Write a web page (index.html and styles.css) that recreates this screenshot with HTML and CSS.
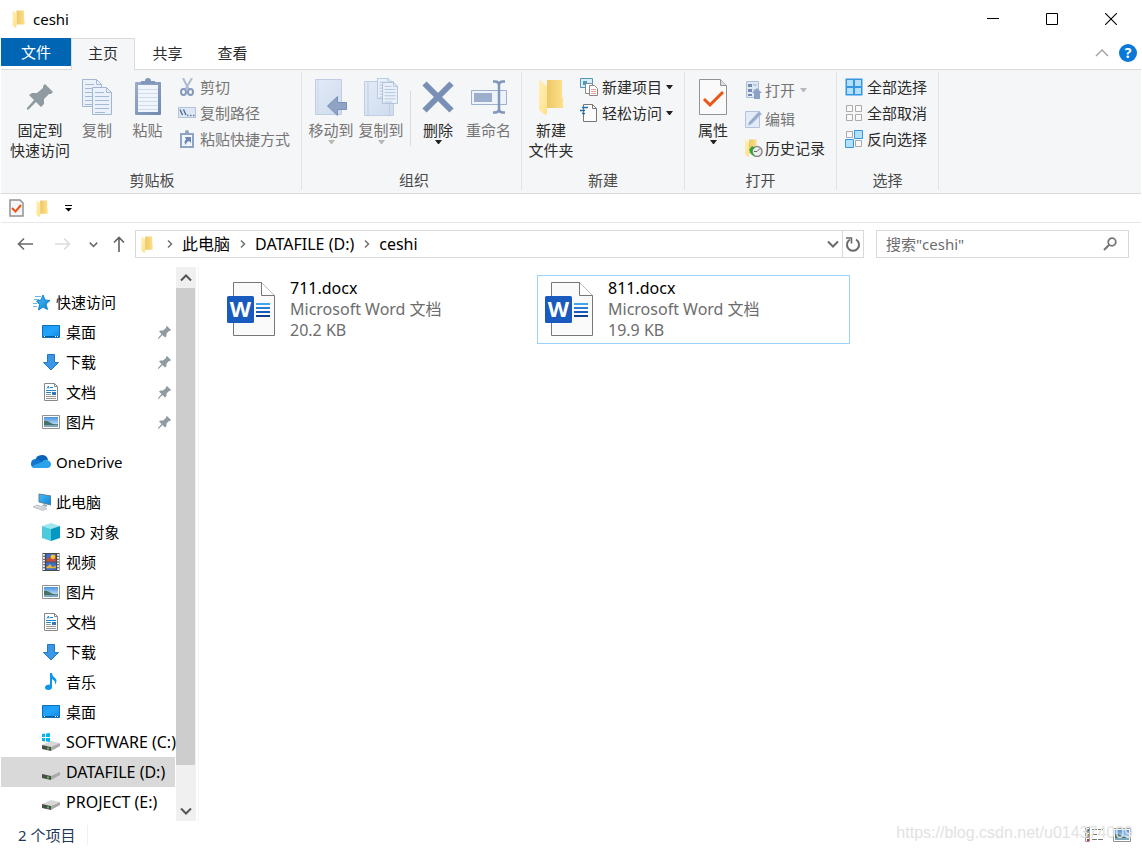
FILE: index.html
```html
<!DOCTYPE html>
<html lang="zh-CN">
<head>
<meta charset="utf-8">
<title>ceshi</title>
<link rel="stylesheet" href="styles.css">
</head>
<body>
<svg class="defs" width="0" height="0" aria-hidden="true">
  <defs>
    <linearGradient id="gFold" x1="0" x2="1" y1="0" y2="0"><stop offset="0" stop-color="#ebc868"/><stop offset="1" stop-color="#ffe089"/></linearGradient>
    <linearGradient id="gFront" x1="0" x2="1" y1="0" y2="1"><stop offset="0" stop-color="#fff0b8"/><stop offset="1" stop-color="#ffe08a"/></linearGradient>
    <linearGradient id="gSky" x1="0" x2="0" y1="0" y2="1"><stop offset="0" stop-color="#4a93dc"/><stop offset="1" stop-color="#e3f2fb"/></linearGradient>
    <linearGradient id="gDesk" x1="0" x2="1" y1="0" y2="1"><stop offset="0" stop-color="#1e96f2"/><stop offset=".5" stop-color="#22a4fb"/><stop offset="1" stop-color="#1187e0"/></linearGradient>
    <linearGradient id="gClip" x1="0" x2="1" y1="0" y2="1"><stop offset="0" stop-color="#9cadcb"/><stop offset="1" stop-color="#7088b2"/></linearGradient>
    <linearGradient id="gPale" x1="0" x2="1" y1="0" y2="1"><stop offset="0" stop-color="#e2eaf6"/><stop offset="1" stop-color="#cfdcee"/></linearGradient>
    <linearGradient id="gBlue" x1="0" x2="1" y1="0" y2="1"><stop offset="0" stop-color="#4cbcf8"/><stop offset="1" stop-color="#0a84d4"/></linearGradient>
  </defs>
  <symbol id="folder" viewBox="0 0 24 36"><path d="M8 1h15v17l1 1v10H8z" fill="url(#gFold)"/><path d="M0 1h1l7 6v28l-2 1-6-5z" fill="url(#gFront)"/></symbol>
  <symbol id="pin" viewBox="0 0 26 26"><path d="M18 0l8 8-2 2-2 0-5 5 0 5-3 3-5-5-7 7-2 1 0-2 7-8-5-5 3-2 5 0 6-5 0-2z" fill="#8f9aa1"/></symbol>
  <symbol id="check" viewBox="0 0 28 36"><path d="M.5.5h21l6 6v29H.5z" fill="#fafafa" stroke="#929292"/><path d="M21.500.5v6h6" fill="#ddd" stroke="#929292"/><path d="M5 20l6 6L24 13" fill="none" stroke="#ea5514" stroke-width="3"/></symbol>
  <symbol id="checkSmall" viewBox="0 0 15 18"><path d="M1 1h10l3 3v13H1z" fill="#f4f6f8" stroke="#929292" stroke-width="1.500"/><path d="M3 9l3.500 3.500L12 6" fill="none" stroke="#ea5514" stroke-width="2"/></symbol>
  <symbol id="sheet" viewBox="0 0 20 28"><path d="M.5.5h14l5 5v22H.5z" fill="#ebf1fa" stroke="#a2b5d2"/><path d="M14.500.5v5h5M3 5.500h9M3 9.500h14M3 13.500h14M3 17.500h14M3 21.500h14M3 25.500h10" fill="none" stroke="#a5b9d6"/></symbol>
  <symbol id="copy" viewBox="0 0 30 36"><use href="#sheet" width="20" height="28"/><use href="#sheet" x="10" y="8" width="20" height="28"/></symbol>
  <symbol id="paste" viewBox="0 0 26 38"><rect y="4" width="26" height="33" rx="1" fill="url(#gClip)"/><rect x="3" y="7" width="20" height="27" fill="#f0f5fc"/><path d="M6 6V3h4q0-3 3-3t3 3h4v3z" fill="#8296bb"/><path d="M3 11.500h20M3 15.500h20M3 19.500h20M3 23.500h20M3 27.500h20M3 31.500h20" stroke="#cfdced"/></symbol>
  <symbol id="cut" viewBox="0 0 18 18"><path d="M5 0l6 12M14 0L7 12" stroke="#aebbd2" stroke-width="2"/><ellipse cx="5.500" cy="14" rx="2.500" ry="3" fill="none" stroke="#8599bc" stroke-width="2"/><ellipse cx="12.500" cy="14" rx="2.500" ry="3" fill="none" stroke="#8599bc" stroke-width="2"/></symbol>
  <symbol id="path" viewBox="0 0 18 18"><rect x=".5" y="3.500" width="17" height="10" fill="#dce6f4" stroke="#b4c4dc"/><path d="M2 5.500l2.500 5.500M5.500 5.500L8 11" stroke="#51688f" stroke-width="1.300"/><path d="M9 11.500h1.500M12 11.500h1.500M15 11.500h1.500" stroke="#667b9e" stroke-width="1.500"/></symbol>
  <symbol id="shortcut" viewBox="0 0 18 18"><path d="M2 3h5q0-3 2-3t2 3h5v15H2z" fill="#8fa3c5"/><path d="M4 5h10v11H4z" fill="#f1f6fd"/><path d="M7 7h6v6l-2-2q-3 1-3 4-3-3 0-5.500z" fill="#6f87b1"/></symbol>
  <symbol id="moveTo" viewBox="0 0 34 38"><path d="M1.500 1.500h26v35h-26z" fill="url(#gPale)" stroke="#bfcee4"/><path d="M4 2v34" stroke="#c8d6e9"/><path d="M32.500 24.500v7h-9v6L13.500 28l10-9.500v6z" fill="#8fa3c5" stroke="#7b90b8"/></symbol>
  <symbol id="copyTo" viewBox="0 0 34 38"><path d="M.5 3.500h29v34H.5z" fill="url(#gPale)" stroke="#bfcee4"/><path d="M4 4v33M25.500 37V24h4" fill="none" stroke="#bfcee4"/><use href="#sheet" x="13" y="0" width="15" height="21"/><use href="#sheet" x="18" y="4" width="16" height="22"/></symbol>
  <symbol id="delete" viewBox="0 0 32 32"><path d="M2.500 2.500l27 27M29.500 2.500l-27 27" stroke="#7a8fb5" stroke-width="6"/></symbol>
  <symbol id="rename" viewBox="0 0 36 34"><path d="M.5 10.500h35v14H.5z" fill="#edf3fb" stroke="#9db0cf"/><path d="M3 13h18v9H3z" fill="#9caecb"/><path d="M22 1.500h2q4 0 4 4v23q0 4-4 4h-2M34 1.500h-2q-4 0-4 4v23q0 4 4 4h2" fill="none" stroke="#8196bb" stroke-width="2.500"/></symbol>
  <symbol id="newItem" viewBox="0 0 18 18"><path d="M.5.5h12v9H.5z" fill="#d7effa" stroke="#5697b7"/><path d="M3 3h4v4H3z" fill="#4b9bbd"/><path d="M5.500 5.500h7v10h-7z" fill="#fff" stroke="#888"/><path d="M9.500 7.500h5l3 3v7h-8z" fill="#fff" stroke="#888"/><path d="M11 11.500h5M11 13.500h5M11 15.500h5" stroke="#e8a090"/></symbol>
  <symbol id="easy" viewBox="0 0 18 18"><path d="M3.500.5h9l4 4v13h-13z" fill="#fcfcfc" stroke="#777"/><path d="M12.500.5v4h4" fill="none" stroke="#777"/><path d="M2 3.500h6M0 6.500h5M2 9.500h3" stroke="#1b6fb0" stroke-width="1.500"/></symbol>
  <symbol id="open" viewBox="0 0 18 18"><path d="M1.500.5h12v16h-12z" fill="#dfe8f5" stroke="#aebfd9"/><path d="M3 3h4v3H3zM3 8h4v3H3zM3 13h4v2H3z" fill="#758bb2"/><path d="M8 4h4M8 9h3" stroke="#9cadcb"/><path d="M9 18v-6H7l5-5 5 5h-2v6z" fill="#8da1c4"/></symbol>
  <symbol id="edit" viewBox="0 0 18 18"><path d="M.5 1.500h14v16H.5z" fill="#e3ebf6" stroke="#b3c3dc"/><path d="M3 16l1-4L14 1l3 3L7 14z" fill="#b3c4de"/><path d="M4 14L15 3" stroke="#92a7c8" stroke-width="2"/></symbol>
  <symbol id="history" viewBox="0 0 18 18"><use href="#folder" x="0" y="0" width="12" height="18"/><circle cx="12" cy="12.500" r="5" fill="#eee" stroke="#8a8a8a" stroke-width="1.500"/><path d="M12 12.500l3-3M12 12.500h-3" stroke="#666"/><path d="M4 11l3-4 3 2-2 1q-2 3 2 7-5-1-5-5z" fill="#26a63a"/></symbol>
  <symbol id="selAll" viewBox="0 0 18 18"><path d="M.5.5h17v17H.5z" fill="#3596e2"/><path d="M2 2h6v6H2zM10 2h6v6h-6zM2 10h6v6H2zM10 10h6v6h-6z" fill="#b3e0ff"/></symbol>
  <symbol id="selNone" viewBox="0 0 18 18"><path d="M1.500 1.500h6v6h-6zM10.500 1.500h6v6h-6zM1.500 10.500h6v6h-6zM10.500 10.500h6v6h-6z" fill="#fafafa" stroke="#ababab"/></symbol>
  <symbol id="selInv" viewBox="0 0 18 18"><path d="M1.500 1.500h6v6h-6zM10.500 10.500h6v6h-6z" fill="#fafafa" stroke="#ababab"/><path d="M9.500.5h8v8h-8zM.5 9.500h8v8h-8z" fill="#b3e0ff" stroke="#3596e2"/></symbol>
  <symbol id="star" viewBox="0 0 20 18"><path d="M12 2l2 5 5 .5-4 3.500 1.500 5.500-4.500-2.500-4.500 3 1-5.500-3-3.500 4.500-1z" fill="url(#gBlue)" stroke="#1583cc"/><path d="M4 3.500h6M3 6.500h5M2 10.500h4M2 13.500h4" stroke="#67b6ea"/></symbol>
  <symbol id="desk" viewBox="0 0 18 18"><path d="M.5 2.500h17v12H.5z" fill="url(#gDesk)" stroke="#0873bf"/><path d="M1 13.500h16" stroke="#075c9d"/><path d="M13 13.500h1M15 13.500h1M2 13.500h1" stroke="#fff"/></symbol>
  <symbol id="down" viewBox="0 0 18 18"><path d="M5.500 1.500h7v8h4L9 17 1.500 9.500h4z" fill="#3997e6" stroke="#2378c3"/></symbol>
  <symbol id="doc" viewBox="0 0 18 18"><path d="M2.500.5h10l3 3v14h-13z" fill="#fff" stroke="#888"/><path d="M12.500.5v3h3" fill="none" stroke="#888"/><path d="M5 5.500l1.500-2.500L7 5.500M8 4.500h3M4 7.500h10M4 9.500h5" stroke="#1687d0" fill="none"/><path d="M4 11.500h5M4 13.500h10M4 15.500h10" stroke="#999"/><path d="M10 9h4v3h-4z" fill="#3178b8"/></symbol>
  <symbol id="pic" viewBox="0 0 18 18"><path d="M.5 2.500h17v13H.5z" fill="#fff" stroke="#929292"/><path d="M2 4h14v10H2z" fill="url(#gSky)"/><path d="M2 8q3-1 6 1.500t8 1.500v3H2z" fill="#467269"/><path d="M2 12h14v2H2z" fill="#7ba8bc"/></symbol>
  <symbol id="cloud" viewBox="0 0 20 14"><path d="M4 6q1-6 7-6 5 0 6 5l-7 3z" fill="#0a63b8"/><path d="M0 9q0-5 5-5 3 0 6 3l-8 6q-3-1-3-4z" fill="#1078d0"/><path d="M11 7q2-3 5-2 4 1 4 4 0 4-4 4H4q-2 0-3-2z" fill="#2ba3ea"/></symbol>
  <symbol id="pc" viewBox="0 0 20 18"><path d="M8 1l12 2v9L8 9z" fill="url(#gBlue)" stroke="#5b7f99"/><path d="M13 11l3 1v2l-5-1z" fill="#9eacb6"/><path d="M2 14l4-2 10 3.500-4 2z" fill="#d5dade" stroke="#aab3b9" stroke-width=".7"/></symbol>
  <symbol id="cube" viewBox="0 0 18 18"><path d="M9 0l9 3-9 3-9-3z" fill="#a1e4ee"/><path d="M0 3l9 3v12l-9-3z" fill="#4ccbdd"/><path d="M9 6l9-3v12l-9 3z" fill="#0598c0"/></symbol>
  <symbol id="film" viewBox="0 0 18 19"><path d="M0 0h18v19H0z" fill="#49484c"/><path d="M1.500 1v17M16.500 1v17" stroke="#fff" stroke-width="2" stroke-dasharray="2 1"/><path d="M4 1h10v8H4zM4 10h10v8H4z" fill="#3c70c9"/><path d="M4 7l4-3 2 3 4-5v7H4z" fill="#cf4934"/><circle cx="11" cy="4" r="2.500" fill="#f2c72d"/><path d="M4 15l4-3 3 3 3-2v3H4z" fill="#e8b53a"/></symbol>
  <symbol id="music" viewBox="0 0 18 18"><path d="M8 0h2q0 3 3 5t0 7q1-4-3-6v8q0 3-3.500 3T3 14.500q0-3 5-3z" fill="#0f95ea"/></symbol>
  <symbol id="drive" viewBox="0 0 18 18"><path d="M0 11l9-4 9 2-9 4z" fill="#d8d8d8"/><path d="M0 11l9 2v4l-9-2z" fill="#4b4b4b"/><path d="M9 13l9-4v3l-9 5z" fill="#a9a9a9"/><path d="M5 14.500h2" stroke="#35d44b" stroke-width="2"/></symbol>
  <symbol id="sysdrive" viewBox="0 0 18 18"><use href="#drive" y="1" width="18" height="18"/><path d="M0 1l3-.5v3.500H0zM4 .5L8 0v4H4zM0 5h3v3.500L0 8zM4 5h4v4l-4-.5z" fill="#06b3ef"/></symbol>
  <symbol id="word" viewBox="0 0 48 54"><path d="M6.500.5h28l13 13v40h-41z" fill="#fafafa" stroke="#777"/><path d="M34.500.5v13h13" fill="#fff" stroke="#777"/><rect y="14" width="27" height="27" rx="1.500" fill="#185abd"/><path d="M29 22h14" stroke="#41a5ee" stroke-width="2"/><path d="M29 26h14" stroke="#2b7cd3" stroke-width="2"/><path d="M29 30h14" stroke="#185abd" stroke-width="2"/><path d="M29 34h14" stroke="#103f91" stroke-width="2"/></symbol>
  <symbol id="chev" viewBox="0 0 12 12"><path d="M1 3.500l5 5 5-5" fill="none" stroke="currentColor" stroke-width="2"/></symbol>
  <symbol id="sep" viewBox="0 0 6 10"><path d="M1 1.500L4.500 5 1 8.500" fill="none" stroke="currentColor" stroke-width="1.500"/></symbol>
  <symbol id="arrow" viewBox="0 0 16 14"><path d="M16 7H1.500M7 1.500L1.500 7 7 12.500" fill="none" stroke="currentColor" stroke-width="1.600"/></symbol>
</svg>

<header class="titlebar">
  <svg class="title-icon"><use href="#folder"/></svg>
  <h1 class="title">ceshi</h1>
  <div class="window-buttons">
    <button aria-label="最小化"><svg width="12" height="12"><path d="M0 5.500h12" stroke="#000"/></svg></button>
    <button aria-label="最大化"><svg width="12" height="12"><path d="M.5.5h11v11H.5z" fill="none" stroke="#000"/></svg></button>
    <button aria-label="关闭"><svg width="12" height="12"><path d="M0 0l12 12M12 0L0 12" stroke="#000" stroke-width="1.100"/></svg></button>
  </div>
</header>

<nav class="tabs">
  <button class="tab file">文件</button>
  <button class="tab active">主页</button>
  <button class="tab">共享</button>
  <button class="tab">查看</button>
  <div class="tab-tools">
    <button aria-label="折叠功能区"><svg width="14" height="8"><path d="M1 7l6-6 6 6" fill="none" stroke="#a0a0a0" stroke-width="1.400"/></svg></button>
    <button class="help" aria-label="帮助">?</button>
  </div>
</nav>

<section class="ribbon">
  <div class="group clipboard">
    <div class="tools">
      <button class="big pinbtn"><span class="big-icon"><svg width="26" height="26"><use href="#pin"/></svg></span>固定到<br>快速访问</button>
      <button class="big off"><span class="big-icon"><svg width="30" height="36"><use href="#copy"/></svg></span>复制</button>
      <button class="big wide off"><span class="big-icon"><svg width="26" height="38"><use href="#paste"/></svg></span>粘贴</button>
      <div class="stack">
        <button class="small off"><svg><use href="#cut"/></svg>剪切</button>
        <button class="small off"><svg><use href="#path"/></svg>复制路径</button>
        <button class="small off"><svg><use href="#shortcut"/></svg>粘贴快捷方式</button>
      </div>
    </div>
    <div class="caption">剪贴板</div>
  </div>
  <div class="group organize">
    <div class="tools">
      <button class="big mid off"><span class="big-icon"><svg width="34" height="38"><use href="#moveTo"/></svg></span>移动到<i class="caret"></i></button>
      <button class="big mid off"><span class="big-icon"><svg width="34" height="38"><use href="#copyTo"/></svg></span>复制到<i class="caret"></i></button>
      <span class="divider"></span>
      <button class="big"><span class="big-icon"><svg width="32" height="32"><use href="#delete"/></svg></span>删除<i class="caret"></i></button>
      <button class="big wide off"><span class="big-icon"><svg width="36" height="34"><use href="#rename"/></svg></span>重命名</button>
    </div>
    <div class="caption">组织</div>
  </div>
  <div class="group">
    <div class="tools">
      <button class="big mid"><span class="big-icon"><svg width="24" height="36"><use href="#folder"/></svg></span>新建<br>文件夹</button>
      <div class="stack">
        <button class="small"><svg><use href="#newItem"/></svg>新建项目<i class="caret"></i></button>
        <button class="small"><svg><use href="#easy"/></svg>轻松访问<i class="caret"></i></button>
      </div>
    </div>
    <div class="caption">新建</div>
  </div>
  <div class="group">
    <div class="tools">
      <button class="big"><span class="big-icon"><svg width="28" height="36"><use href="#check"/></svg></span>属性<i class="caret"></i></button>
      <div class="stack loose">
        <button class="small off"><svg><use href="#open"/></svg>打开<i class="caret"></i></button>
        <button class="small off"><svg><use href="#edit"/></svg>编辑</button>
        <button class="small"><svg><use href="#history"/></svg>历史记录</button>
      </div>
    </div>
    <div class="caption">打开</div>
  </div>
  <div class="group">
    <div class="tools">
      <div class="stack">
        <button class="small"><svg><use href="#selAll"/></svg>全部选择</button>
        <button class="small"><svg><use href="#selNone"/></svg>全部取消</button>
        <button class="small"><svg><use href="#selInv"/></svg>反向选择</button>
      </div>
    </div>
    <div class="caption">选择</div>
  </div>
</section>

<div class="quickbar">
  <button aria-label="属性"><svg width="15" height="18"><use href="#checkSmall"/></svg></button>
  <button aria-label="新建文件夹"><svg width="12" height="17"><use href="#folder"/></svg></button>
  <button aria-label="自定义快速访问工具栏"><svg width="7" height="7"><path d="M0 .5h7" stroke="#000"/><path d="M0 3h7L3.500 6.500z"/></svg></button>
</div>

<div class="navbar">
  <div class="history">
    <button aria-label="后退"><svg width="16" height="14"><use href="#arrow"/></svg></button>
    <button class="faded" aria-label="前进"><svg width="16" height="14" class="flip"><use href="#arrow"/></svg></button>
    <button class="recent" aria-label="最近的位置"><svg width="9" height="9"><use href="#chev"/></svg></button>
    <button class="up" aria-label="上移"><svg width="12" height="16"><path d="M6 16V1.500M1 6.500l5-5 5 5" fill="none" stroke="currentColor" stroke-width="1.600"/></svg></button>
  </div>
  <div class="address">
    <svg class="address-icon"><use href="#folder"/></svg>
    <svg class="sep"><use href="#sep"/></svg><a href="#pc">此电脑</a>
    <svg class="sep"><use href="#sep"/></svg><a href="#d">DATAFILE (D:)</a>
    <svg class="sep"><use href="#sep"/></svg><a href="#ceshi">ceshi</a>
    <button class="drop" aria-label="以前的位置"><svg width="12" height="12"><use href="#chev"/></svg></button>
    <button class="refresh" aria-label="刷新"><svg width="16" height="16"><path d="M11 3.500A6 6 0 1 1 5 3.500" fill="none" stroke="currentColor" stroke-width="2"/><path d="M1 2h5.500v5.500" fill="none" stroke="currentColor" stroke-width="1.600"/></svg></button>
  </div>
  <label class="search">
    <input type="text" placeholder='搜索"ceshi"' aria-label="搜索">
    <svg width="14" height="14"><circle cx="9" cy="5" r="3.800" fill="none" stroke="#777" stroke-width="1.800"/><path d="M6.500 7.500L1 13" stroke="#777" stroke-width="2.200"/></svg>
  </label>
</div>

<main class="main">
  <nav class="tree">
    <a class="root" href="#q"><svg><use href="#star"/></svg>快速访问</a>
    <a href="#1"><svg><use href="#desk"/></svg>桌面<svg class="pinned"><use href="#pin"/></svg></a>
    <a href="#2"><svg><use href="#down"/></svg>下载<svg class="pinned"><use href="#pin"/></svg></a>
    <a href="#3"><svg><use href="#doc"/></svg>文档<svg class="pinned"><use href="#pin"/></svg></a>
    <a href="#4"><svg><use href="#pic"/></svg>图片<svg class="pinned"><use href="#pin"/></svg></a>
    <a class="root" href="#o"><svg><use href="#cloud"/></svg>OneDrive</a>
    <a class="root" href="#pc"><svg><use href="#pc"/></svg>此电脑</a>
    <a href="#5"><svg><use href="#cube"/></svg>3D 对象</a>
    <a href="#6"><svg><use href="#film"/></svg>视频</a>
    <a href="#7"><svg><use href="#pic"/></svg>图片</a>
    <a href="#8"><svg><use href="#doc"/></svg>文档</a>
    <a href="#9"><svg><use href="#down"/></svg>下载</a>
    <a href="#10"><svg><use href="#music"/></svg>音乐</a>
    <a href="#11"><svg><use href="#desk"/></svg>桌面</a>
    <a class="disk" href="#c"><svg><use href="#sysdrive"/></svg>SOFTWARE (C:)</a>
    <a class="disk current" href="#d"><svg><use href="#drive"/></svg>DATAFILE (D:)</a>
    <a class="disk" href="#e"><svg><use href="#drive"/></svg>PROJECT (E:)</a>
  </nav>
  <div class="scrollbar">
    <button aria-label="向上滚动"><svg width="12" height="12" class="turn"><use href="#chev"/></svg></button>
    <div class="thumb"></div>
    <button aria-label="向下滚动"><svg width="12" height="12"><use href="#chev"/></svg></button>
  </div>
  <div class="files">
    <article class="item">
      <svg><use href="#word"/><text x="13.500" y="35" class="word-letter">W</text></svg>
      <div><div class="name">711.docx</div><div>Microsoft Word 文档</div><div>20.2 KB</div></div>
    </article>
    <article class="item selected">
      <svg><use href="#word"/><text x="13.500" y="35" class="word-letter">W</text></svg>
      <div><div class="name">811.docx</div><div>Microsoft Word 文档</div><div>19.9 KB</div></div>
    </article>
  </div>
</main>

<footer class="status">
  <span class="count">2 个项目</span>
  <span class="watermark">https://blog.csdn.net/u014374009</span>
  <div class="views">
    <button aria-label="详细信息"><svg width="18" height="16"><path d="M.5.5h4v4h-4zM.5 5.500h4v4h-4zM.5 10.500h4v4h-4z" fill="#fff" stroke="#999"/><path d="M2 2h2v2H2z" fill="#28789f"/><path d="M2 7h2v2H2z" fill="#a38929"/><path d="M2 12h2v2H2z" fill="#c7351f"/><path d="M7 2.500h5M13 2.500h5M7 7.500h5M13 7.500h5M7 12.500h5M13 12.500h5" stroke="#777"/></svg></button>
    <button aria-label="大缩略图"><svg width="18" height="18"><use href="#pic"/></svg></button>
  </div>
</footer>
</body>
</html>
```
FILE: styles.css
```css
* { box-sizing: border-box; }

body {
  margin: 0;
  padding: 0 1px;
  min-height: 100vh;
  display: flex;
  flex-direction: column;
  background: #fff;
  color: #000;
  font: 15px/20px "Noto Sans", "Noto Sans CJK SC", sans-serif;
}

button {
  margin: 0;
  padding: 0;
  border: 0;
  background: none;
  color: inherit;
  font: inherit;
}

a { color: inherit; text-decoration: none; }
svg { display: block; flex: none; }
.defs { position: absolute; }
.word-letter { font: bold 22px "Open Sans", sans-serif; fill: #fff; text-anchor: middle; }
.flip { transform: scaleX(-1); }
.turn { transform: rotate(180deg); }

.titlebar { display: flex; align-items: center; height: 38px; padding: 0 1px 0 11px; }
.title-icon { width: 13px; height: 18px; }
.title { margin: 0 0 0 8px; font-size: 15px; font-weight: 400; }
.window-buttons { display: flex; margin-left: auto; }
.window-buttons button { display: grid; place-items: center; width: 59px; height: 38px; }

.tabs { display: flex; height: 31px; }
.tab { width: 65px; height: 31px; padding-bottom: 2px; color: #2b2b2b; }
.tab.file { width: 70px; height: 28px; padding: 0; background: #0066b4; color: #fff; }
.tab.active {
  width: 64px;
  height: 32px;
  padding-bottom: 3px;
  border: 1px solid #dadbdc;
  border-bottom: 0;
  background: #f5f6f7;
  position: relative;
}
.tab-tools { display: flex; align-items: center; gap: 10px; margin-left: auto; padding: 0 4px 2px 0; }
.help { width: 18px; height: 18px; border-radius: 50%; background: #0a78d6; color: #fff; font-size: 14px; font-weight: 700; line-height: 18px; }

.ribbon { display: flex; padding: 2px 0 3px; border: solid #dadbdc; border-width: 1px 0; background: #f5f6f7; }
.group { display: flex; flex-direction: column; padding: 0 11px 0 4px; border-right: 1px solid #e2e3e4; }
.group.organize { padding-right: 6px; }
.group.clipboard { padding-left: 6px; }
.tools { display: flex; align-items: flex-start; height: 98px; color: #2b2b2b; }
.caption { margin: 0 -11px 0 -4px; color: #4a4a4a; text-align: center; }
.big { width: 48px; padding-top: 6px; text-align: center; white-space: nowrap; }
.big.mid { width: 50px; }
.big.wide { width: 53px; }
.big.pinbtn { width: 66px; }
.big-icon { display: grid; place-items: center; height: 38px; margin-bottom: 4px; }
.off { color: #757575; }
.caret { display: block; width: 7px; border: solid transparent; border-width: 4px 3px 0; border-top-color: #222; margin: 0 auto; }
.off .caret { border-top-color: #b8b8b8; }
.small .caret { margin: 0; }
.divider { width: 1px; height: 55px; margin: 19px 3px 0 4px; background: #dadbdc; }
.stack { padding: 2px 0 0 4px; }
.stack:first-child { padding-left: 4px; }
.small { display: flex; align-items: center; gap: 4px; height: 26px; white-space: nowrap; }
.small svg { width: 18px; height: 18px; }
.stack.loose { padding: 3px 0 0 8px; }
.loose .small { height: 29px; gap: 2px; }
.loose .caret { margin-left: 3px; }

.quickbar { display: flex; align-items: center; gap: 12px; height: 29px; padding-left: 8px; border-bottom: 1px solid #e8e8e8; }
.quickbar button:last-child { margin-left: 5px; }

.navbar { display: flex; align-items: center; padding: 7px 12px 9px 16px; }
.history { display: flex; align-items: center; width: 118px; color: #6a6a6a; }
.history .faded { color: #dcdcdc; margin-left: 22px; }
.history .recent { margin-left: 18px; }
.history .up { margin-left: 15px; color: #606060; }
.address { display: flex; align-items: center; flex: 1; height: 28px; padding-left: 5px; border: 1px solid #d9d9d9; font-size: 16px; }
.address-icon { width: 12px; height: 17px; margin-right: 4px; }
.sep { width: 6px; height: 10px; margin: 0 9px 0 10px; color: #707070; }
.drop, .refresh { display: grid; place-items: center; color: #6a6a6a; }
.drop { width: 19px; margin-left: auto; }
.refresh { width: 21px; height: 26px; border-left: 1px solid #d9d9d9; }
.search { display: flex; align-items: center; width: 253px; height: 28px; margin-left: 12px; padding: 0 11px 0 9px; border: 1px solid #d9d9d9; }
.search input { flex: 1; min-width: 0; padding: 0; border: 0; outline: 0; background: none; font: inherit; }
.search input::placeholder { color: #6d6d6d; opacity: 1; }

.main { display: flex; flex: 1; }
.tree { width: 175px; padding: 10px 0 4px; white-space: nowrap; }
.tree a { display: flex; align-items: center; gap: 6px; height: 30px; padding-left: 41px; }
.tree a.root { gap: 5px; margin-top: 10px; padding-left: 30px; }
.tree a.disk { font-size: 16px; }
.tree a.current { width: 174px; background: #d9d9d9; }
.tree svg { width: 18px; height: 18px; }
.tree .root svg { width: 20px; }
.tree svg.pinned { width: 13px; height: 13px; margin: 0 5px 0 auto; }
.scrollbar { display: flex; flex-direction: column; width: 20px; background: #f0f0f0; color: #555; }
.scrollbar button { display: grid; place-items: center; width: 19px; height: 21px; }
.thumb { flex: 1; width: 19px; margin-bottom: 35px; background: #cdcdcd; }
.files {
  display: grid;
  grid-template-columns: repeat(auto-fill, 313px);
  align-content: start;
  gap: 5px;
  flex: 1;
  margin-left: 2px;
  padding: 8px 0 0 20px;
  border-left: 1px solid #f5f5f5;
}
.item { display: flex; align-items: flex-start; gap: 15px; padding: 2px 7px; border: 1px solid transparent; color: #6d6d6d; font-size: 16px; line-height: 21px; }
.item svg { width: 48px; height: 54px; margin-top: 4px; }
.item.selected { border-color: #99d1ff; }
.name { color: #000; }

.status { display: flex; align-items: center; height: 30px; padding: 0 10px 2px 17px; color: #1e395b; position: relative; }
.count { padding-right: 12px; border-right: 1px solid #f0f0f0; }
.watermark { position: absolute; right: 8px; top: 2px; color: #e2e2e2; font: 16px/20px "Liberation Sans", sans-serif; }
.views { display: flex; align-items: center; gap: 10px; margin-left: auto; }
```
